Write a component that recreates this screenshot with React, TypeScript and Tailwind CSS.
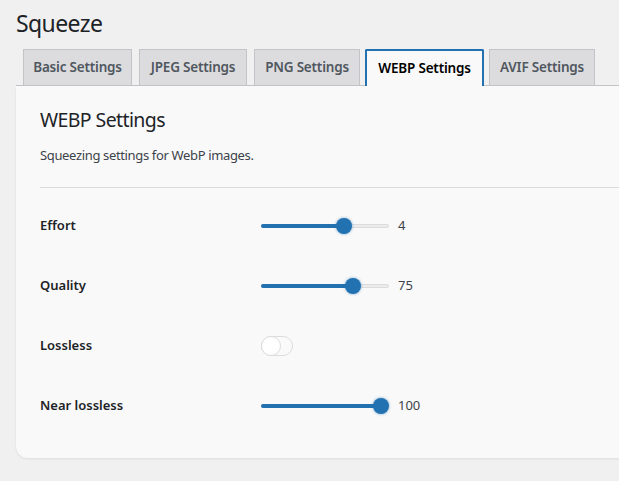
const tabs = [
  { label: "Basic Settings", w: "w-[109px]" },
  { label: "JPEG Settings", w: "w-[108px]" },
  { label: "PNG Settings", w: "w-[106px]" },
  { label: "WEBP Settings", w: "w-[119px]", active: true },
  { label: "AVIF Settings", w: "w-[106px]" },
];

function Slider({ pct, value }: { pct: number; value: string }) {
  return (
    <div className="flex items-center">
      <div className="relative h-4 w-[128px]">
        <div className="absolute left-0 right-0 top-[6px] h-[4px] rounded-full border border-[#dcdcde] bg-[#ececec]" />
        <div
          className="absolute left-0 top-[6px] h-[4px] rounded-full bg-[#2271b1]"
          style={{ width: `${8 + 112 * pct}px` }}
        />
        <div
          className="absolute top-0 h-4 w-4 rounded-full bg-[#2271b1] shadow-[0_0_3px_rgba(34,113,177,0.6)]"
          style={{ left: `${112 * pct}px` }}
        />
      </div>
      <span className="ml-[9px] text-[13px] text-[#3c434a]">{value}</span>
    </div>
  );
}

function Row({ label, children }: { label: string; children: React.ReactNode }) {
  return (
    <div className="flex h-[60px] items-center">
      <div className="w-[221px] shrink-0 text-[13px] font-semibold text-[#1d2327]">{label}</div>
      {children}
    </div>
  );
}

export default function App() {
  return (
    <div
      className="min-h-[481px] w-[619px] overflow-hidden bg-[#f0f0f1] pl-4 pt-[9px]"
      style={{ fontFamily: '"Noto Sans", "Open Sans", sans-serif' }}
    >
      <h1 className="text-[23px] font-normal leading-[29px] tracking-[-0.6px] text-[#1d2327]">Squeeze</h1>

      <div className="mt-3 flex h-[36px] items-end border-b border-[#c3c4c7] pl-[7px]">
        {tabs.map((t, i) =>
          t.active ? (
            <div
              key={t.label}
              className={`${t.w} relative z-10 -mb-px ml-[5px] flex h-[37px] shrink-0 items-center justify-center whitespace-nowrap rounded-t-[2px] border-2 border-b-0 border-[#2271b1] bg-[#f9f9f9] text-[13.5px] font-semibold tracking-[-0.2px] text-[#000]`}
            >
              {t.label}
            </div>
          ) : (
            <div
              key={t.label}
              className={`${t.w} ${i === 0 ? "" : i === 4 ? "ml-[5px]" : "ml-[7px]"} flex h-[36px] shrink-0 items-center justify-center whitespace-nowrap border border-b-0 border-[#c3c4c7] bg-[#dcdcde] text-[13.5px] font-semibold tracking-[-0.2px] text-[#50575e]`}
            >
              {t.label}
            </div>
          )
        )}
      </div>

      <div className="mr-[-20px] rounded-bl-xl bg-[#f9f9f9] pb-[22px] pl-6 pt-[20px] shadow-[0_1px_3px_rgba(0,0,0,0.08)]">
        <h2 className="text-[19.5px] font-normal leading-7 tracking-[-0.6px] text-[#1d2327]">WEBP Settings</h2>
        <p className="mt-[11px] text-[13px] leading-5 tracking-[-0.35px] text-[#3c434a]">Squeezing settings for WebP images.</p>
        <div className="mt-[22px] border-t border-[#dcdcde]" />
        <div className="mt-[8px]">
          <Row label="Effort">
            <Slider pct={4 / 6} value="4" />
          </Row>
          <Row label="Quality">
            <Slider pct={0.75} value="75" />
          </Row>
          <Row label="Lossless">
            <div className="relative h-[20px] w-[32px] rounded-full border border-[#dcdcde] bg-[#fafafa]">
              <div className="absolute left-[-1px] top-[-1px] h-[20px] w-[20px] rounded-full border border-[#dcdcde] bg-white" />
            </div>
          </Row>
          <Row label="Near lossless">
            <Slider pct={1} value="100" />
          </Row>
        </div>
      </div>
    </div>
  );
}
